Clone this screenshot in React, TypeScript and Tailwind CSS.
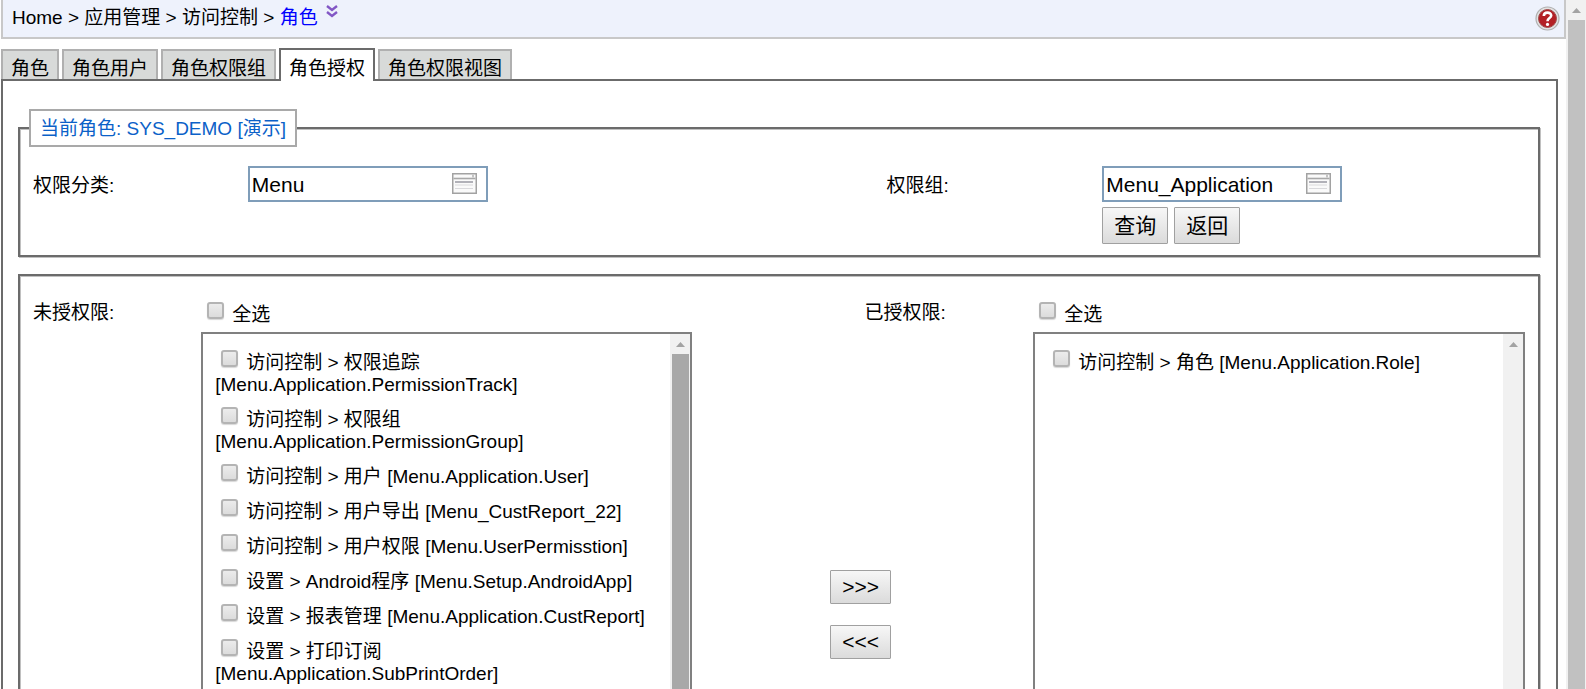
import { useState, type ReactNode } from "react";

const tabs = ["角色", "角色用户", "角色权限组", "角色授权", "角色权限视图"];

const pending = [
  "访问控制 > 权限追踪 [Menu.Application.PermissionTrack]",
  "访问控制 > 权限组 [Menu.Application.PermissionGroup]",
  "访问控制 > 用户 [Menu.Application.User]",
  "访问控制 > 用户导出 [Menu_CustReport_22]",
  "访问控制 > 用户权限 [Menu.UserPermisstion]",
  "设置 > Android程序 [Menu.Setup.AndroidApp]",
  "设置 > 报表管理 [Menu.Application.CustReport]",
  "设置 > 打印订阅 [Menu.Application.SubPrintOrder]",
];

const granted = ["访问控制 > 角色 [Menu.Application.Role]"];

const fieldsetClass =
  "min-w-0 border-2 border-[#6b6b6b] shadow-[1px_1px_0_#c0c0c0,inset_1px_1px_0_#c0c0c0]";

function ScrollTrack({ thumb }: { thumb?: string }) {
  return (
    <div aria-hidden="true" className="flex w-5 shrink-0 flex-col bg-[#f1f1f1] pr-px pl-0.5">
      <div className="flex h-5 shrink-0 items-center justify-center">
        <svg width="9" height="5" viewBox="0 0 9 5" className="fill-[#a3a3a3]">
          <path d="M4.5 0 9 5H0z" />
        </svg>
      </div>
      {thumb && <div className={`flex-1 ${thumb}`} />}
    </div>
  );
}

function Tick() {
  return (
    <input
      type="checkbox"
      className="mr-2 mb-0.5 ml-1.5 inline-block size-[17px] appearance-none rounded-[3px] border-2 border-[#b4b4b4] bg-linear-to-b from-[#ececec] to-[#dcdcdc] align-baseline shadow-[0_1px_1px_#d8d8d8] checked:from-[#7f9db9] checked:to-[#7f9db9]"
    />
  );
}

function PushButton({ children, className }: { children: ReactNode; className: string }) {
  return (
    <button
      type="button"
      className={`rounded-[1px] border border-[#a0a0a0] bg-linear-to-b from-[#f7f7f7] to-[#dbdbdb] px-[11px] text-[21px] ${className}`}
    >
      {children}
    </button>
  );
}

function ListIcon() {
  return (
    <svg width="25" height="21" viewBox="0 0 25 21" fill="none">
      <rect x="0.75" y="0.75" width="23.5" height="19.5" fill="#fafafa" stroke="#a2a2a2" strokeWidth="1.5" />
      <path d="M1.5 5.5H23.5" stroke="#a8a8a8" strokeWidth="1.6" />
      <path d="M21 1.5V4.5" stroke="#c4c4c4" strokeWidth="2" />
      <path d="M3 9H21" stroke="#a9a9b0" strokeWidth="1.8" />
      <path d="M3 12H21M3 15.5H21" stroke="#d9d9dc" strokeWidth="1.2" />
    </svg>
  );
}

function Lookup({ id, value }: { id: string; value: string }) {
  const [text, setText] = useState(value);
  return (
    <div className="flex h-9 w-60 border-2 border-[#7f9db9] bg-white">
      <input
        id={id}
        value={text}
        onChange={(e) => setText(e.target.value)}
        className="w-full min-w-0 flex-1 pt-px pl-0.5 text-[21px] outline-none"
      />
      <button type="button" aria-label="选择" className="mr-[9px] pb-0.5">
        <ListIcon />
      </button>
    </div>
  );
}

function PermissionList({ items, thumb }: { items: string[]; thumb?: string }) {
  return (
    <div className="min-w-0 pt-[3px]">
      <label className="block leading-[22px]">
        <Tick />
        全选
      </label>
      <div className="mt-1.5 flex h-[480px] border-2 border-[#808080]">
        <ul className="min-w-0 flex-1 px-3 pt-4">
          {items.map((item) => (
            <li key={item} className="pb-[11px]">
              <label className="block leading-[22px]">
                <Tick />
                {item}
              </label>
            </li>
          ))}
        </ul>
        <ScrollTrack thumb={thumb} />
      </div>
    </div>
  );
}

export default function App() {
  return (
    <div className="flex h-screen overflow-hidden bg-white font-['Liberation_Sans','Noto_Sans_CJK_SC',sans-serif] text-[19px] text-black">
      <div className="flex min-w-0 flex-1 flex-col">
        <header className="ml-px flex h-[39px] shrink-0 items-center border-2 border-t-0 border-[#c8c8c8] bg-[#eef2fc] pr-1 pl-[9px]">
          <nav className="flex-1 pb-0.5 leading-6">
            Home &gt; 应用管理 &gt; 访问控制 &gt;{" "}
            <a href="#role" className="text-[#0000ff]">
              角色
            </a>
            <button type="button" aria-label="展开" className="ml-2 align-[6px]">
              <svg width="12" height="13" viewBox="0 0 12 13" fill="none" stroke="#8257c5" strokeWidth="2.4">
                <path d="M1 1 6 5 11 1M1 7 6 11 11 7" />
              </svg>
            </button>
          </nav>
          <button type="button" aria-label="帮助">
            <svg width="25" height="25" viewBox="0 0 25 25">
              <circle cx="12.5" cy="12.5" r="11.5" fill="#e2e2e2" stroke="#b0b0b0" strokeWidth="1.2" />
              <circle cx="12.5" cy="12.5" r="9" fill="#b32025" stroke="#a04a4c" />
              <path d="M8.8 10C8.8 5.6 16.2 5.6 16.2 9.6 16.2 12.2 12.5 12 12.5 15.2" fill="none" stroke="#fff" strokeWidth="2.6" />
              <circle cx="12.5" cy="18.4" r="1.6" fill="#fff" />
            </svg>
          </button>
        </header>

        <div className="mt-[9px] mr-2 ml-px flex min-h-0 flex-1 flex-col">
          <div className="flex h-[31px] shrink-0 items-end gap-[3px]">
            {tabs.map((tab) =>
              tab === "角色授权" ? (
                <button
                  key={tab}
                  type="button"
                  className="relative z-10 -mb-0.5 h-[33px] border-2 border-b-0 border-[#6b6b6b] bg-white px-2 pt-1.5 leading-6"
                >
                  {tab}
                </button>
              ) : (
                <button
                  key={tab}
                  type="button"
                  className="h-[30px] border-2 border-b-0 border-[#b0b0b0] bg-[#d8dad9] px-2 pt-2 leading-5"
                >
                  {tab}
                </button>
              ),
            )}
          </div>

          <main className="min-h-0 flex-1 border-2 border-b-0 border-[#6b6b6b] pt-7 pr-4 pl-[15px]">
            <fieldset className={`${fieldsetClass} pr-3 pb-[11px] pl-[13px]`}>
              <legend className="-ml-1 border-2 border-[#a9a9a9] bg-white px-[9px] pt-1.5 pb-1 leading-6 text-[#0b61c8]">
                当前角色: SYS_DEMO [演示]
              </legend>
              <div className="grid grid-cols-[215fr_639fr_216fr_424fr] pt-[19px]">
                <label htmlFor="category" className="pt-2 leading-6">
                  权限分类:
                </label>
                <Lookup id="category" value="Menu" />
                <label htmlFor="group" className="pt-2 leading-6">
                  权限组:
                </label>
                <div>
                  <Lookup id="group" value="Menu_Application" />
                  <div className="mt-[5px] flex gap-1.5">
                    <PushButton className="h-[37px]">查询</PushButton>
                    <PushButton className="h-[37px]">返回</PushButton>
                  </div>
                </div>
              </div>
            </fieldset>

            <fieldset className={`${fieldsetClass} mt-[17px] pt-[23px] pr-[13px] pb-4 pl-[13px]`}>
              <div className="grid grid-cols-[168fr_490fr_341fr_491fr]">
                <div className="pt-0.5 leading-6">未授权限:</div>
                <PermissionList items={pending} thumb="bg-[#a8a8a8]" />
                <div className="flex flex-col items-center pr-1">
                  <div className="w-1/2 self-end pt-0.5 pl-1 leading-6">已授权限:</div>
                  <PushButton className="mt-[245px] h-[34px] pb-1">&gt;&gt;&gt;</PushButton>
                  <PushButton className="mt-[21px] h-[34px] pb-1">&lt;&lt;&lt;</PushButton>
                </div>
                <PermissionList items={granted} />
              </div>
            </fieldset>
          </main>
        </div>
      </div>
      <ScrollTrack thumb="bg-[#c1c1c1]" />
    </div>
  );
}
